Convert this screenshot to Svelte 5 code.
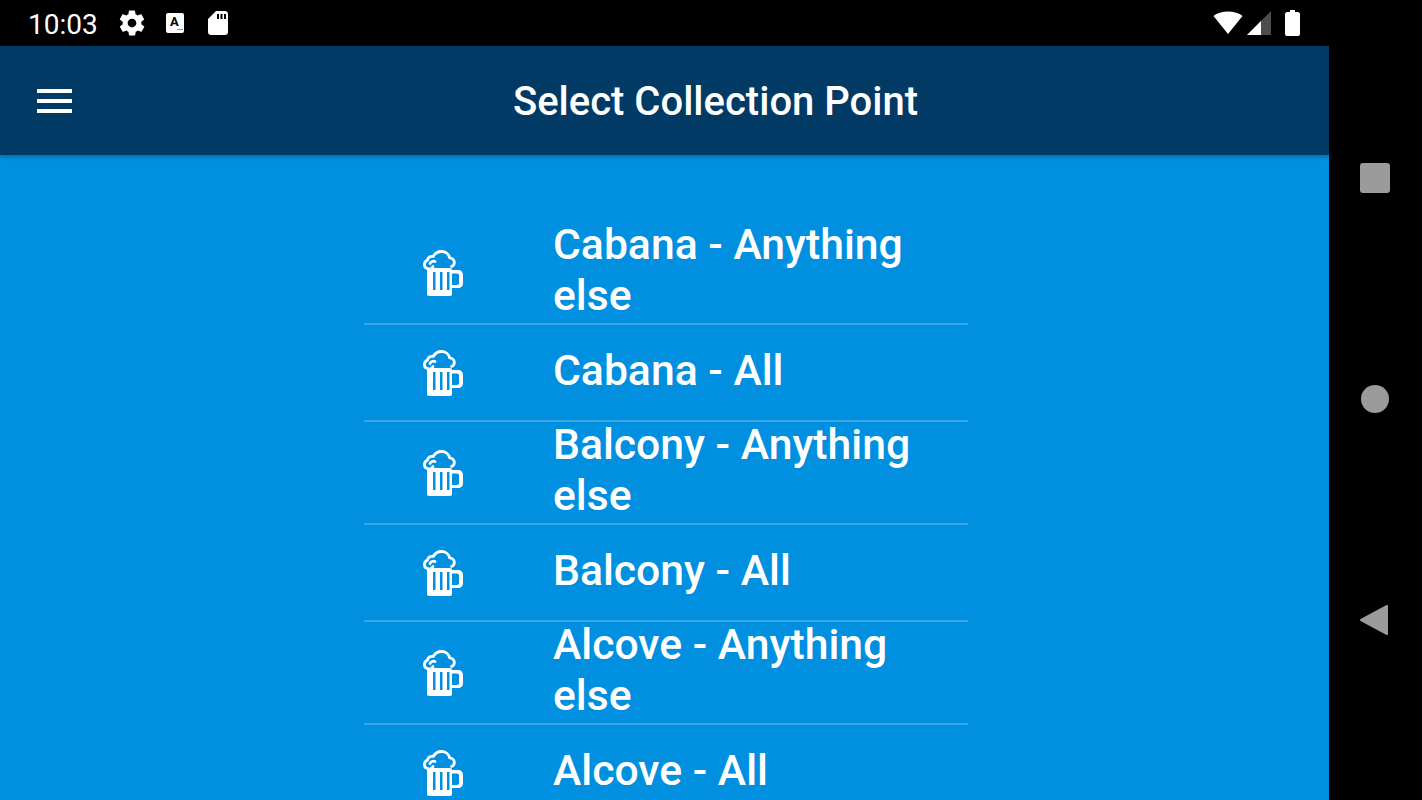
<script>
  const points = ['Cabana - Anything else', 'Cabana - All', 'Balcony - Anything else', 'Balcony - All', 'Alcove - Anything else', 'Alcove - All'];
</script>

<svg class="defs" width="0" height="0" aria-hidden="true">
  <symbol id="beer" viewBox="0 0 42 48">
    <path fill="none" stroke="#fff" stroke-width="2.800" stroke-linecap="round" stroke-linejoin="round" d="M5.500 19c-2.800-.6-4.300-2.800-4-5.200.3-1.800 1.300-3.200 3-3.700.4-2.800 3-4.300 5.700-3.600C12 3.200 15 1.500 18.500 1.500c4 0 7.500 2.600 8.200 6.400 3.100.2 5 2.500 4.600 5.200-.3 1.700-1.300 3-2.800 3.400" />
    <path fill="none" stroke="#fff" stroke-width="2.800" stroke-linecap="round" stroke-linejoin="round" d="M7 13.500c.8-1.900 3-2.800 5-2M5.500 19c2 .2 3.800-.8 4.500-2.500" />
    <path fill="#fff" fill-rule="evenodd" d="M6 18h21c1.200 0 2 .8 2 2h6c3 0 5 2 5 5v8c0 3-2 5-5 5h-6v6c0 1.200-.8 2-2 2H6c-1.200 0-2-.8-2-2V20c0-1.200.8-2 2-2zM10 22v18h2.500V22zM17 22v18h2.500V22zM24 22v18h2.500V22zM29 23.500V35h5c1.300 0 2-.8 2-2v-7.500c0-1.200-.7-2-2-2z" />
  </symbol>
</svg>

<div class="screen">
  <div class="app">
    <div class="status">
      <span class="time">10:03</span>
      <svg class="ic gear" viewBox="0 0 24 24"><path fill="#fff" d="M19.4 13c.04-.3.1-.7.1-1s-.03-.7-.1-1l2.100-1.650c.2-.15.24-.42.12-.64l-2-3.460c-.12-.22-.4-.3-.6-.22l-2.500 1c-.5-.4-1.100-.7-1.700-1l-.4-2.650A.5.5 0 0 0 14 2h-4c-.25 0-.46.18-.5.420l-.4 2.650c-.6.25-1.200.6-1.700 1l-2.500-1c-.22-.08-.5 0-.6.220l-2 3.460c-.13.22-.07.5.12.640L4.600 11c-.05.3-.1.700-.1 1s.03.7.1 1l-2.100 1.650c-.2.15-.25.42-.12.64l2 3.460c.12.220.4.300.6.220l2.500-1c.5.400 1.100.700 1.700 1l.4 2.650c.04.24.25.42.5.42h4c.25 0 .46-.18.5-.42l.4-2.650c.6-.25 1.200-.6 1.700-1l2.500 1c.22.08.5 0 .6-.22l2-3.460c.12-.22.07-.5-.12-.64zM12 15.500a3.500 3.500 0 1 1 0-7 3.500 3.500 0 0 1 0 7z" /></svg>
      <span class="abox"><span class="a">A</span><span class="dots">...</span></span>
      <svg class="ic sd" viewBox="0 0 20 24"><path fill="#fff" fill-rule="evenodd" d="M8 0h9c1.500 0 3 1 3 3v18c0 1.700-1.300 3-3 3H3c-1.700 0-3-1.300-3-3V8zM9 3v5h2V3zM12.500 3v5h2V3zM16 3v5h2V3z" /></svg>
      <span class="grow"></span>
      <svg class="wifi" viewBox="0 0 30 24"><path fill="#fff" d="M15 23 .5 5C4 2 9 .5 15 .5S26 2 29.500 5z" /></svg>
      <svg class="signal" viewBox="0 0 24 24"><path fill="#fff" fill-opacity=".3" d="M24 0v24H0z" /><path fill="#fff" d="M14 10v14H0z" /></svg>
      <svg class="batt" viewBox="0 0 15 26"><path fill="#fff" d="M5 0h5v2h3c1 0 2 1 2 2v20c0 1-1 2-2 2H2c-1 0-2-1-2-2V4c0-1 1-2 2-2h3z" /></svg>
    </div>

    <header class="bar">
      <span class="burger"><i></i><i></i><i></i></span>
      <h1>Select Collection Point</h1>
    </header>

    <main class="content">
      <ul class="list">
        {#each points as name, i (name)}
          <li class:last={i === points.length - 1}>
            <span class="icon"><svg width="42" height="48"><use href="#beer" /></svg></span>
            <span class="label">{name}</span>
          </li>
        {/each}
      </ul>
    </main>
  </div>

  <nav class="nav">
    <span class="square"></span>
    <span class="circle"></span>
    <svg class="back" viewBox="0 0 30 32"><path fill="#9b9b9b" stroke="#9b9b9b" stroke-width="2" stroke-linejoin="round" d="M28 2v28L2 16z" /></svg>
  </nav>
</div>

<style>
  :global(body) { background: #000; overflow: hidden; }
  .defs { position: absolute; }
  .screen { display: flex; width: 1422px; height: 800px; overflow: hidden; background: #000; font-family: Roboto, sans-serif; color: #fff; }
  .app { width: 1329px; display: flex; flex-direction: column; flex-shrink: 0; }

  .status { height: 46px; flex-shrink: 0; background: #000; display: flex; align-items: center; padding: 0 29px 0 28px; }
  .time { font-size: 28px; width: 91px; padding-top: 2px; }
  .ic { display: block; }
  .gear { width: 30px; height: 30px; margin-left: -2px; }
  .abox { position: relative; width: 18px; height: 20px; margin-left: 19px; background: #fff; border-radius: 2px; color: #000; }
  .a { position: absolute; left: 4px; top: 1px; font-size: 13px; font-weight: 700; line-height: 15px; }
  .dots { position: absolute; right: 1px; bottom: 3px; font-size: 7px; font-weight: 700; line-height: 4px; }
  .sd { width: 20px; height: 24px; margin-left: 24px; }
  .grow { flex: 1; }
  .wifi { width: 30px; height: 24px; }
  .signal { width: 24px; height: 24px; margin-left: 4px; }
  .batt { width: 15px; height: 26px; margin-left: 14px; }

  .bar { height: 109px; flex-shrink: 0; background: #013a64; display: flex; align-items: center; position: relative; z-index: 1; box-shadow: 0 2px 4px rgba(0, 0, 0, 0.25); }
  .burger { display: flex; flex-direction: column; gap: 6px; margin-left: 37px; width: 35px; }
  .burger i { display: block; height: 4px; background: #fff; }
  h1 { margin: 0; position: absolute; left: 0; right: 0; padding-left: 102px; padding-top: 3px; text-align: center; font-size: 40px; font-weight: 500; line-height: 44px; }

  .content { flex: 1; min-height: 0; background: #0090df; padding-top: 65.500px; overflow: hidden; }
  .list { list-style: none; margin: 0 0 0 364px; padding: 0; width: 604px; }
  li { display: flex; align-items: center; min-height: 93px; padding-bottom: 3px; margin-bottom: -1px; border-bottom: 2px solid rgba(255, 255, 255, 0.22); }
  li.last { border-bottom: none; }
  .icon { width: 189px; flex-shrink: 0; padding-left: 59px; padding-top: 7px; box-sizing: border-box; display: flex; }
  .label { font-size: 42.700px; font-weight: 500; line-height: 51px; margin: -1.500px 0; }

  .nav { flex: 1; display: flex; flex-direction: column; align-items: center; position: relative; padding-top: 163px; }
  .square { width: 30px; height: 30px; border-radius: 3px; background: #9b9b9b; margin-right: 1px; }
  .circle { width: 28px; height: 28px; border-radius: 50%; background: #9b9b9b; margin-top: 192px; margin-right: 2px; }
  .back { width: 30px; height: 32px; margin-top: 191px; margin-right: 3px; display: block; }
</style>
